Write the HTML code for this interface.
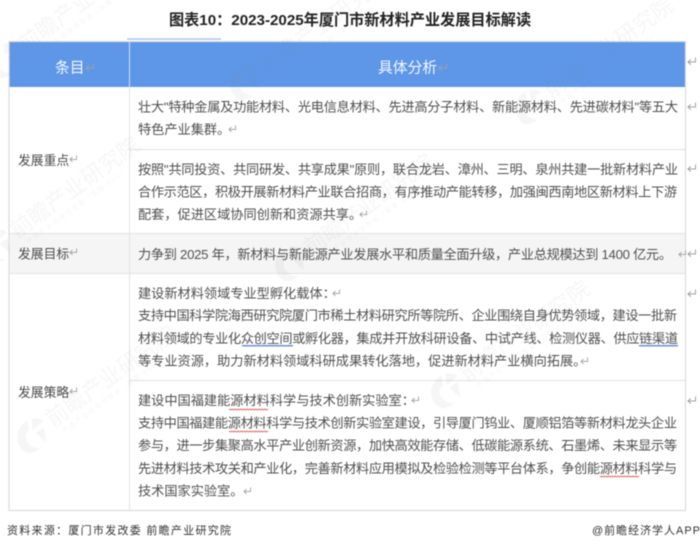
<!DOCTYPE html>
<html lang="zh"><head><meta charset="utf-8"><title>图表10</title>
<style>
html,body{margin:0;padding:0;background:#fff;width:700px;height:549px;overflow:hidden}
svg{display:block;filter:blur(.42px)}
text{font-family:"Liberation Sans","Noto Sans CJK SC",sans-serif}
.b{font-size:13.2px;fill:#505050}
.wm{font-size:22px;fill:#8c8c8c}
.ws{font-size:6.500px;fill:#8c8c8c;letter-spacing:1.500px}
</style></head><body>
<svg width="700" height="549" viewBox="0 0 700 549" xmlns="http://www.w3.org/2000/svg">
<defs>
<symbol id="r" viewBox="0 0 10 9" overflow="visible"><path d="M8.500 .5V5H1M3.800 2.400L1 5L3.800 7.600" fill="none" stroke="#a0a0a0" stroke-width="1"/></symbol>
<g id="w">
<path d="M-14 4C-14-9-3-16 8-15L3-6C-2-6-5-2-5 3C-5 9-2 13 2 15C-7 16-14 12-14 4Z" fill="#8c8c8c"/>
<path d="M6-4L12-14C16-12 19-9 20-5Z" fill="#8c8c8c"/>
<path d="M7 0L17 0L10 14Z" fill="#8c8c8c"/>
<text class="wm" x="24" y="6">前瞻产业研究院</text>
<text class="ws" x="30" y="17">中国产业咨询领导者（股票:839）</text>
</g>
</defs>
<rect width="700" height="549" fill="#fff"/>
<text x="169" y="25" font-size="15.200" font-weight="700" fill="#222" textLength="362" lengthAdjust="spacing">图表10：2023-2025年厦门市新材料产业发展目标解读</text>
<rect x="127" y="38.400" width="94" height="1.200" fill="#9db8e8"/>
<rect x="9.500" y="234" width="676" height="39" fill="#f5f5f5"/>
<rect x="9.500" y="42" width="676" height="45" fill="#5e97e8"/>
<g fill="none" stroke="#e2e2e2" stroke-width="1">
<path d="M129.500 87V510M129.500 149.500H685M9 233.500H685M9 273.500H685M129.500 380.500H685"/>
<rect x="9" y="41.500" width="676.500" height="469" stroke="#dcdcdc" stroke-width="1.200"/>
</g>
<path d="M129.500 42V87" stroke="#cfe0f8" stroke-width="1"/>
<g opacity=".075">
<use href="#w" transform="translate(2,62) rotate(-36)"/>
<use href="#w" transform="translate(243,84) rotate(-36)"/>
<use href="#w" transform="translate(528,108) rotate(-36)"/>
<use href="#w" transform="translate(-6,248) rotate(-36)"/>
<use href="#w" transform="translate(288,265) rotate(-36)"/>
<use href="#w" transform="translate(30,437) rotate(-36)"/>
<use href="#w" transform="translate(444,392) rotate(-36)"/>
</g>
<text x="55" y="72.500" font-size="14.800" fill="#f4f8ff">条目</text>
<use href="#r" x="85" y="63" width="10" height="9"/>
<text x="378" y="72.500" font-size="14.800" fill="#f4f8ff">具体分析</text>
<use href="#r" x="438" y="63" width="10" height="9"/>
<text x="18" y="165" font-size="12.800" fill="#4a4a4a">发展重点</text><use href="#r" x="69" y="155" width="9" height="8"/>
<text x="18" y="258.500" font-size="12.800" fill="#4a4a4a">发展目标</text><use href="#r" x="69" y="248" width="9" height="8"/>
<text x="18" y="397" font-size="12.800" fill="#4a4a4a">发展策略</text><use href="#r" x="69" y="387" width="9" height="8"/>
<text class="b" x="138" y="111.500" textLength="540" lengthAdjust="spacing">壮大"特种金属及功能材料、光电信息材料、先进高分子材料、新能源材料、先进碳材料"等五大</text>
<text class="b" x="138" y="134">特色产业集群。</text><use href="#r" x="228" y="125" width="9" height="8"/>
<text class="b" x="138" y="174" textLength="540" lengthAdjust="spacing">按照"共同投资、共同研发、共享成果"原则，联合龙岩、漳州、三明、泉州共建一批新材料产业</text>
<text class="b" x="138" y="196.500" textLength="539" lengthAdjust="spacing">合作示范区，积极开展新材料产业联合招商，有序推动产能转移，加强闽西南地区新材料上下游</text>
<text class="b" x="138" y="219">配套，促进区域协同创新和资源共享。</text><use href="#r" x="359" y="210" width="9" height="8"/>
<text class="b" x="138" y="259" textLength="534" lengthAdjust="spacing">力争到 2025 年，新材料与新能源产业发展水平和质量全面升级，产业总规模达到 1400 亿元。</text>
<use href="#r" x="678" y="250" width="9" height="8"/>
<text class="b" x="138" y="298">建设新材料领域专业型孵化载体：</text><use href="#r" x="332" y="289" width="9" height="8"/>
<text class="b" x="138" y="320" textLength="539" lengthAdjust="spacing">支持中国科学院海西研究院厦门市稀土材料研究所等院所、企业围绕自身优势领域，建设一批新</text>
<text class="b" x="138" y="343" textLength="540" lengthAdjust="spacing">材料领域的专业化众创空间或孵化器，集成并开放科研设备、中试产线、检测仪器、供应链渠道</text>
<text class="b" x="138" y="365.500">等专业资源，助力新材料领域科研成果转化落地，促进新材料产业横向拓展。</text><use href="#r" x="580" y="357" width="9" height="8"/>
<text class="b" x="138" y="405">建设中国福建能源材料科学与技术创新实验室：</text><use href="#r" x="411" y="396" width="9" height="8"/>
<text class="b" x="138" y="427.500" textLength="539" lengthAdjust="spacing">支持中国福建能源材料科学与技术创新实验室建设，引导厦门钨业、厦顺铝箔等新材料龙头企业</text>
<text class="b" x="138" y="450" textLength="539" lengthAdjust="spacing">参与，进一步集聚高水平产业创新资源，加快高效能存储、低碳能源系统、石墨烯、未来显示等</text>
<text class="b" x="138" y="473" textLength="539" lengthAdjust="spacing">先进材料技术攻关和产业化，完善新材料应用模拟及检验检测等平台体系，争创能源材料科学与</text>
<text class="b" x="138" y="495.500">技术国家实验室。</text><use href="#r" x="243" y="487" width="9" height="8"/>
<rect x="242" y="345" width="51" height="1.500" fill="#6f8fe8"/>
<rect x="639" y="345" width="39" height="1.500" fill="#6f8fe8"/>
<g fill="none" stroke="#e05050" stroke-width=".8">
<path d="M229 409l1.500 1 1.500-1 1.500 1 1.500-1 1.500 1 1.500-1 1.500 1 1.500-1 1.500 1 1.500-1 1.500 1 1.500-1 1.500 1 1.500-1 1.500 1 1.500-1 1.500 1 1.500-1 1.500 1 1.500-1 1.500 1 1.500-1 1.500 1 1.500-1 1.500 1 1.500-1"/>
<path d="M229 431l1.500 1 1.500-1 1.500 1 1.500-1 1.500 1 1.500-1 1.500 1 1.500-1 1.500 1 1.500-1 1.500 1 1.500-1 1.500 1 1.500-1 1.500 1 1.500-1 1.500 1 1.500-1 1.500 1 1.500-1 1.500 1 1.500-1 1.500 1 1.500-1 1.500 1 1.500-1"/>
<path d="M600 476l1.500 1 1.500-1 1.500 1 1.500-1 1.500 1 1.500-1 1.500 1 1.500-1 1.500 1 1.500-1 1.500 1 1.500-1 1.500 1 1.500-1 1.500 1 1.500-1 1.500 1 1.500-1 1.500 1 1.500-1 1.500 1 1.500-1 1.500 1 1.500-1 1.500 1 1.500-1"/>
</g>
<use href="#r" x="687" y="57" width="10" height="9"/>
<use href="#r" x="687" y="102" width="10" height="9"/>
<use href="#r" x="687" y="164" width="10" height="9"/>
<use href="#r" x="687" y="249" width="10" height="9"/>
<use href="#r" x="687" y="289" width="10" height="9"/>
<use href="#r" x="687" y="396" width="10" height="9"/>
<text x="7" y="534" font-size="11" fill="#333" textLength="224" lengthAdjust="spacing">资料来源：厦门市发改委 前瞻产业研究院</text>
<text x="592" y="534" font-size="11" fill="#333" textLength="108" lengthAdjust="spacing">@前瞻经济学人APP</text>
</svg>
</body></html>
